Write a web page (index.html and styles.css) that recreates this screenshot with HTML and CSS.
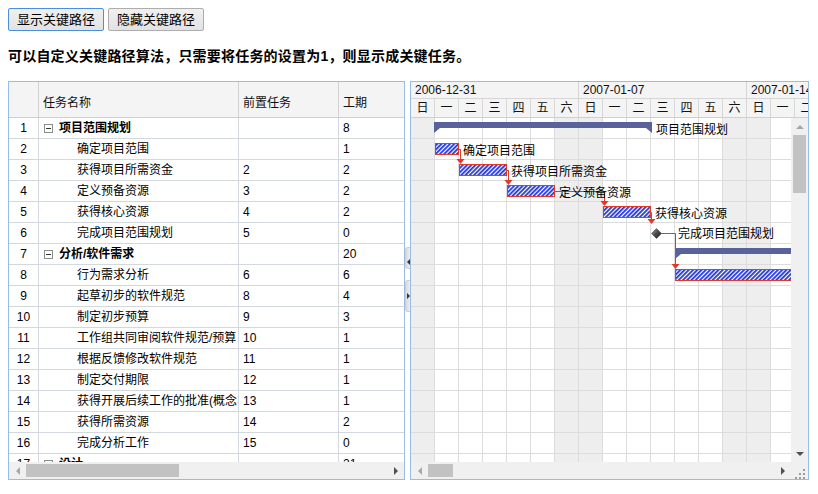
FILE: index.html
```html
<!DOCTYPE html>
<html lang="zh-CN">
<head>
<meta charset="utf-8">
<title>关键路径</title>
<link rel="stylesheet" href="styles.css">
</head>
<body>
<div class="toolbar">
  <button class="btn btn-focus">显示关键路径</button>
  <button class="btn">隐藏关键路径</button>
</div>
<p class="note">可以自定义关键路径算法，只需要将任务的设置为1，则显示成关键任务。</p>
<div class="gantt">
  <div class="grid-panel">
    <div class="grid-head row">
      <div class="hcell"></div>
      <div class="hcell">任务名称</div>
      <div class="hcell">前置任务</div>
      <div class="hcell">工期</div>
    </div>
    <div class="grid-body">
      <div class="row"><div class="cell num">1</div><div class="cell name sum-name"><span class="tog"></span>项目范围规划</div><div class="cell"></div><div class="cell">8</div></div>
      <div class="row"><div class="cell num">2</div><div class="cell name">确定项目范围</div><div class="cell"></div><div class="cell">1</div></div>
      <div class="row"><div class="cell num">3</div><div class="cell name">获得项目所需资金</div><div class="cell">2</div><div class="cell">2</div></div>
      <div class="row"><div class="cell num">4</div><div class="cell name">定义预备资源</div><div class="cell">3</div><div class="cell">2</div></div>
      <div class="row"><div class="cell num">5</div><div class="cell name">获得核心资源</div><div class="cell">4</div><div class="cell">2</div></div>
      <div class="row"><div class="cell num">6</div><div class="cell name">完成项目范围规划</div><div class="cell">5</div><div class="cell">0</div></div>
      <div class="row"><div class="cell num">7</div><div class="cell name sum-name"><span class="tog"></span>分析/软件需求</div><div class="cell"></div><div class="cell">20</div></div>
      <div class="row"><div class="cell num">8</div><div class="cell name">行为需求分析</div><div class="cell">6</div><div class="cell">6</div></div>
      <div class="row"><div class="cell num">9</div><div class="cell name">起草初步的软件规范</div><div class="cell">8</div><div class="cell">4</div></div>
      <div class="row"><div class="cell num">10</div><div class="cell name">制定初步预算</div><div class="cell">9</div><div class="cell">3</div></div>
      <div class="row"><div class="cell num">11</div><div class="cell name">工作组共同审阅软件规范/预算</div><div class="cell">10</div><div class="cell">1</div></div>
      <div class="row"><div class="cell num">12</div><div class="cell name">根据反馈修改软件规范</div><div class="cell">11</div><div class="cell">1</div></div>
      <div class="row"><div class="cell num">13</div><div class="cell name">制定交付期限</div><div class="cell">12</div><div class="cell">1</div></div>
      <div class="row"><div class="cell num">14</div><div class="cell name">获得开展后续工作的批准(概念、指导方针)</div><div class="cell">13</div><div class="cell">1</div></div>
      <div class="row"><div class="cell num">15</div><div class="cell name">获得所需资源</div><div class="cell">14</div><div class="cell">2</div></div>
      <div class="row"><div class="cell num">16</div><div class="cell name">完成分析工作</div><div class="cell">15</div><div class="cell">0</div></div>
      <div class="row"><div class="cell num">17</div><div class="cell name sum-name"><span class="tog"></span>设计</div><div class="cell"></div><div class="cell">21</div></div>
    </div>
    <div class="hscroll">
      <span class="arr arr-left off"></span>
      <span class="thumb grid-thumb"></span>
      <span class="fill"></span>
      <span class="arr arr-right"></span>
    </div>
  </div>

  <div class="splitter">
    <div class="tab tab-collapse"><span class="tri tri-left"></span></div>
    <div class="tab tab-expand"><span class="tri tri-right"></span></div>
  </div>

  <div class="chart-panel">
    <div class="chart-head">
      <div class="weeks">
        <div class="week">2006-12-31</div>
        <div class="week">2007-01-07</div>
        <div class="week">2007-01-14</div>
      </div>
      <div class="days">
        <div class="day">日</div><div class="day">一</div><div class="day">二</div><div class="day">三</div><div class="day">四</div><div class="day">五</div><div class="day">六</div>
        <div class="day">日</div><div class="day">一</div><div class="day">二</div><div class="day">三</div><div class="day">四</div><div class="day">五</div><div class="day">六</div>
        <div class="day">日</div><div class="day">一</div><div class="day">二</div>
      </div>
    </div>
    <div class="chart-mid">
      <div class="chart-view">
        <svg class="bars" width="380" height="344" viewBox="0 0 380 344">
          <defs>
            <pattern id="hatch" width="3" height="3" patternUnits="userSpaceOnUse" patternTransform="rotate(45)">
              <rect width="3" height="3" fill="#ffffff"/>
              <rect width="1.8" height="3" fill="#2236d8"/>
            </pattern>
            <linearGradient id="msfill" x1="0" y1="0" x2="1" y2="1">
              <stop offset="0" stop-color="#a0a0a0"/>
              <stop offset="0.5" stop-color="#4a4a4a"/>
              <stop offset="1" stop-color="#1e1e1e"/>
            </linearGradient>
          </defs>

          <!-- row 1 summary -->
          <path class="sum" d="M23 4H241V15L235 10H29L23 15Z"/>

          <!-- row 7 summary -->
          <path class="sum" d="M264 130H400V136H270L264 141Z"/>

          <!-- links -->
          <path class="link" d="M48 31.5H49.5V41"/>
          <polygon class="arrow" points="45.5,41 53.5,41 49.5,46"/>
          <path class="link" d="M96 52.5H97.5V62"/>
          <polygon class="arrow" points="93.5,62 101.5,62 97.5,67"/>
          <path class="link" d="M144 73.5H193.5V83"/>
          <polygon class="arrow" points="189.5,83 197.5,83 193.5,88"/>
          <path class="link" d="M240 94.5H240.5V101"/>
          <polygon class="arrow" points="236.5,101 244.5,101 240.5,106"/>
          <path class="link" d="M250.5 115.5H264.5V146"/>
          <polygon class="arrow" points="260.5,146 268.5,146 264.5,151"/>

          <!-- tasks -->
          <rect class="task" x="24.5" y="25.5" width="23" height="11"/>
          <rect class="task" x="48.5" y="46.5" width="47" height="11"/>
          <rect class="task" x="96.5" y="67.5" width="47" height="11"/>
          <rect class="task" x="192.5" y="88.5" width="47" height="11"/>
          <polygon class="ms" points="245.5,110.5 250.5,115.5 245.5,120.5 240.5,115.5"/>
          <rect class="task" x="264.5" y="151.5" width="200" height="11"/>

          <!-- labels -->
          <text class="lbl" x="245" y="16">项目范围规划</text>
          <text class="lbl" x="52" y="37">确定项目范围</text>
          <text class="lbl" x="100" y="58">获得项目所需资金</text>
          <text class="lbl" x="148" y="79">定义预备资源</text>
          <text class="lbl" x="244" y="100">获得核心资源</text>
          <text class="lbl" x="267" y="120">完成项目范围规划</text>
        </svg>
      </div>
      <div class="vscroll">
        <span class="arr arr-up off"></span>
        <span class="vthumb"></span>
        <span class="fill"></span>
        <span class="arr arr-down"></span>
      </div>
    </div>
    <div class="chart-foot">
      <div class="hscroll chart-hscroll">
        <span class="arr arr-left off"></span>
        <span class="thumb chart-thumb"></span>
        <span class="fill"></span>
        <span class="arr arr-right"></span>
      </div>
      <div class="corner">
        <svg width="17" height="17" viewBox="0 0 17 17">
          <rect x="12" y="7" width="2" height="2" fill="#9c9c9c"/>
          <rect x="8" y="11" width="2" height="2" fill="#9c9c9c"/>
          <rect x="12" y="11" width="2" height="2" fill="#9c9c9c"/>
          <rect x="4" y="15" width="2" height="2" fill="#9c9c9c"/>
          <rect x="8" y="15" width="2" height="2" fill="#9c9c9c"/>
          <rect x="12" y="15" width="2" height="2" fill="#9c9c9c"/>
        </svg>
      </div>
    </div>
  </div>
</div>
</body>
</html>
```

FILE: styles.css
```css
* {
  box-sizing: border-box;
}

html,
body {
  margin: 0;
}

body {
  padding: 8px;
  font-family: "Liberation Sans", "Noto Sans CJK SC", sans-serif;
  font-size: 12px;
  color: #000;
  background: #fff;
}

/* toolbar */
.toolbar {
  display: flex;
  gap: 4px;
  height: 23px;
}

.btn {
  height: 23px;
  padding: 0 8px;
  font-family: "Liberation Sans", "Noto Sans CJK SC", sans-serif;
  font-size: 13px;
  line-height: 21px;
  color: #000;
  background: linear-gradient(#f0f0f0, #e2e2e2);
  border: 1px solid #adadad;
  border-radius: 2px;
}

.btn-focus {
  border-color: #4a8fdc;
}

.note {
  margin: 15px 0;
  font-size: 14px;
  font-weight: bold;
  line-height: 20px;
  letter-spacing: 0.2px;
}

/* gantt */
.gantt {
  display: flex;
  width: 801px;
  height: 399px;
}

.grid-panel {
  flex: none;
  width: 397px;
  border: 1px solid #99bbe8;
  display: flex;
  flex-direction: column;
  overflow: hidden;
}

.row {
  display: grid;
  grid-template-columns: 30px 200px 100px 100px;
  width: 430px;
  flex: none;
}

.grid-head {
  height: 36px;
  background: #f4f4f4;
  border-bottom: 1px solid #cfcfcf;
}

.hcell {
  display: flex;
  align-items: center;
  padding: 3px 4px 0;
  border-right: 1px solid #d2d2d2;
  color: #111;
  white-space: nowrap;
}

.grid-body {
  height: 344px;
  overflow: hidden;
  flex: none;
}

.grid-body .row {
  height: 21px;
  border-bottom: 1px solid #d3d8df;
}

.cell {
  padding: 0 4px;
  line-height: 20px;
  border-right: 1px solid #d3d8df;
  white-space: nowrap;
  overflow: hidden;
  text-overflow: clip;
}

.num {
  text-align: center;
  padding: 0;
}

.name {
  padding-left: 38px;
}

.sum-name {
  display: flex;
  align-items: center;
  padding-left: 5px;
  font-weight: bold;
}

.tog {
  flex: none;
  width: 9px;
  height: 9px;
  margin-right: 6px;
  border: 1px solid #8c8c8c;
  background: linear-gradient(#333, #333) center / 5px 1px no-repeat, #fff;
}

/* scrollbars */
.hscroll {
  display: flex;
  align-items: center;
  height: 17px;
  flex: none;
  background: #f0f0f0;
}

.fill {
  flex: 1;
}

.thumb {
  flex: none;
  height: 13px;
  background: #c2c2c2;
}

.grid-thumb {
  width: 153px;
}

.chart-thumb {
  width: 25px;
}

.arr {
  flex: none;
  width: 17px;
  height: 17px;
  display: flex;
  align-items: center;
  justify-content: center;
}

.arr::before {
  content: "";
  width: 0;
  height: 0;
  border-style: solid;
}

.arr-left::before {
  border-width: 4px 4px 4px 0;
  border-color: transparent #505050 transparent transparent;
}

.arr-right::before {
  border-width: 4px 0 4px 4px;
  border-color: transparent transparent transparent #505050;
}

.arr-up::before {
  border-width: 0 4px 4px;
  border-color: transparent transparent #505050;
}

.arr-down::before {
  border-width: 4px 4px 0;
  border-color: #505050 transparent transparent;
}

.arr-left.off::before {
  border-right-color: #a8a8a8;
}

.arr-up.off::before {
  border-bottom-color: #a8a8a8;
}

.vscroll {
  flex: none;
  width: 17px;
  height: 344px;
  display: flex;
  flex-direction: column;
  align-items: center;
  background: #f0f0f0;
}

.vthumb {
  flex: none;
  width: 13px;
  height: 58px;
  background: #c2c2c2;
}

/* splitter */
.splitter {
  flex: none;
  width: 5px;
  display: flex;
  flex-direction: column;
  align-items: flex-end;
  background: #fff;
}

.tab {
  flex: none;
  width: 5px;
  display: flex;
  justify-content: center;
  background: linear-gradient(to right, #d9d9d9, #eeeeee);
  border: 1px solid #cfcfcf;
  border-right: 0;
  border-radius: 3px 0 0 3px;
}

.tab-collapse {
  margin-top: 166px;
  height: 22px;
  align-items: flex-end;
  padding-bottom: 3px;
}

.tab-expand {
  margin-top: 11px;
  height: 32px;
  align-items: center;
}

.tri {
  width: 0;
  height: 0;
  border-style: solid;
}

.tri-left {
  border-width: 3px 3px 3px 0;
  border-color: transparent #333 transparent transparent;
}

.tri-right {
  border-width: 3px 0 3px 3px;
  border-color: transparent transparent transparent #333;
}

/* chart */
.chart-panel {
  flex: none;
  width: 399px;
  border: 1px solid #99bbe8;
  display: flex;
  flex-direction: column;
  overflow: hidden;
}

.chart-head {
  flex: none;
  height: 36px;
  background: #f4f4f4;
  border-bottom: 1px solid #cfcfcf;
  overflow: hidden;
}

.weeks {
  display: flex;
  height: 17px;
  border-bottom: 1px solid #d6d6d6;
}

.week {
  flex: none;
  width: 168px;
  padding-left: 4px;
  line-height: 17px;
  border-right: 1px solid #d6d6d6;
  white-space: nowrap;
  color: #111;
}

.days {
  display: flex;
  height: 18px;
}

.day {
  flex: none;
  width: 24px;
  text-align: center;
  line-height: 18px;
  border-right: 1px solid #d6d6d6;
  color: #111;
}

.chart-mid {
  flex: none;
  display: flex;
  height: 344px;
}

.chart-view {
  flex: none;
  width: 380px;
  height: 344px;
  overflow: hidden;
  background:
    linear-gradient(to right, transparent 23px, #dcdcdc 23px) 0 0 / 24px 100%,
    linear-gradient(to bottom, transparent 20px, #dcdcdc 20px) 0 0 / 100% 21px,
    linear-gradient(to right, #eeeeee 24px, #ffffff 24px 144px, #eeeeee 144px 192px, #ffffff 192px 312px, #eeeeee 312px 360px, #ffffff 360px);
}

.bars {
  display: block;
}

.sum {
  fill: #59629a;
}

.task {
  fill: url(#hatch);
  stroke: #e2382b;
  stroke-width: 1;
}

.link {
  fill: none;
  stroke: #e2382b;
  stroke-width: 1;
}

.arrow {
  fill: #e2382b;
}

.ms {
  fill: url(#msfill);
  stroke: #333;
  stroke-width: 0.5;
}

.lbl {
  font-size: 12px;
  fill: #000;
}

.chart-foot {
  flex: none;
  display: flex;
  height: 17px;
}

.chart-hscroll {
  width: 380px;
}

.corner {
  flex: none;
  width: 17px;
  height: 17px;
  background: #f0f0f0;
}

.corner svg {
  display: block;
}
```
